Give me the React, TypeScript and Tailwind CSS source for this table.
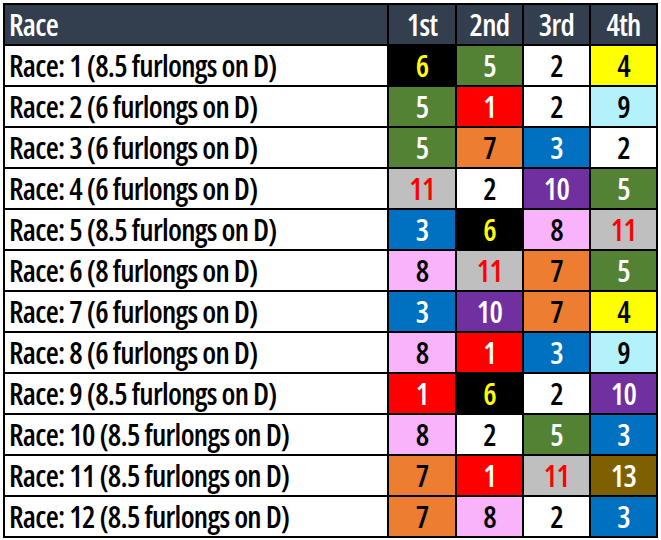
const races = [
  { label: "Race: 1 (8.5 furlongs on D)", picks: [6, 5, 2, 4] },
  { label: "Race: 2 (6 furlongs on D)", picks: [5, 1, 2, 9] },
  { label: "Race: 3 (6 furlongs on D)", picks: [5, 7, 3, 2] },
  { label: "Race: 4 (6 furlongs on D)", picks: [11, 2, 10, 5] },
  { label: "Race: 5 (8.5 furlongs on D)", picks: [3, 6, 8, 11] },
  { label: "Race: 6 (8 furlongs on D)", picks: [8, 11, 7, 5] },
  { label: "Race: 7 (6 furlongs on D)", picks: [3, 10, 7, 4] },
  { label: "Race: 8 (6 furlongs on D)", picks: [8, 1, 3, 9] },
  { label: "Race: 9 (8.5 furlongs on D)", picks: [1, 6, 2, 10] },
  { label: "Race: 10 (8.5 furlongs on D)", picks: [8, 2, 5, 3] },
  { label: "Race: 11 (8.5 furlongs on D)", picks: [7, 1, 11, 13] },
  { label: "Race: 12 (8.5 furlongs on D)", picks: [7, 8, 2, 3] },
];

// saddle cloth colours by program number
const cloth: Record<number, string> = {
  1: "bg-[#ff0000] text-white",
  2: "bg-white text-black",
  3: "bg-[#0070c0] text-white",
  4: "bg-[#ffff00] text-black",
  5: "bg-[#548235] text-white",
  6: "bg-black text-[#ffff00]",
  7: "bg-[#ed7d31] text-black",
  8: "bg-[#f9b3fa] text-black",
  9: "bg-[#b3f1fb] text-black",
  10: "bg-[#7030a0] text-white",
  11: "bg-[#bfbfbf] text-[#ff0000]",
  13: "bg-[#7f6000] text-white",
};

export default function App() {
  return (
    <div className="p-[3px] font-['Open_Sans',sans-serif] font-[550] [font-stretch:75%] text-[30px] leading-none tracking-[-0.7px]">
      <div className="grid w-fit grid-cols-[382px_66px_65px_65px_65px] auto-rows-[39px] gap-[2px] border-2 border-black bg-black">
        <div className="flex items-center bg-[#333f4f] px-[4px] text-white">Race</div>
        {["1st", "2nd", "3rd", "4th"].map((h) => (
          <div key={h} className="flex items-center justify-center bg-[#333f4f] text-white">
            {h}
          </div>
        ))}
        {races.map((race) => (
          <div key={race.label} className="contents">
            <div className="flex items-center bg-white px-[4px] text-black">{race.label}</div>
            {race.picks.map((n, i) => (
              <div key={i} className={`flex items-center justify-center ${cloth[n]}`}>
                {n}
              </div>
            ))}
          </div>
        ))}
      </div>
    </div>
  );
}
